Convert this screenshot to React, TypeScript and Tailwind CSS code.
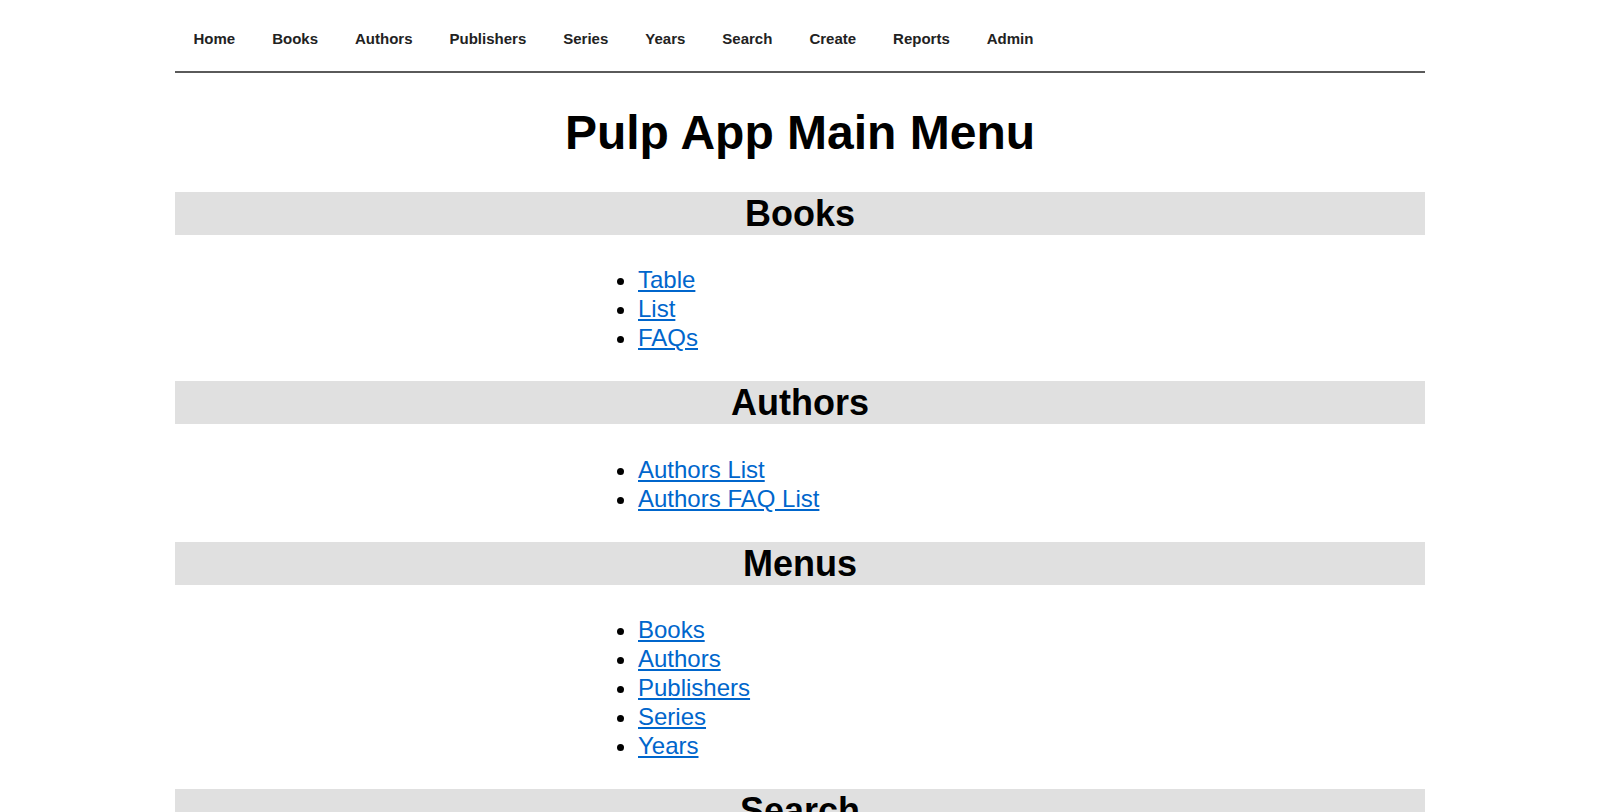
import React from "react";

const navLinks = [
  "Home",
  "Books",
  "Authors",
  "Publishers",
  "Series",
  "Years",
  "Search",
  "Create",
  "Reports",
  "Admin",
];

const sections: { title: string; links: string[] }[] = [
  { title: "Books", links: ["Table", "List", "FAQs"] },
  { title: "Authors", links: ["Authors List", "Authors FAQ List"] },
  {
    title: "Menus",
    links: ["Books", "Authors", "Publishers", "Series", "Years"],
  },
  { title: "Search", links: ["Search Books", "Search Authors"] },
];

export default function App() {
  return (
    <div className="min-h-screen bg-white text-black font-['Liberation_Sans',Arial,sans-serif]">
      <div className="mx-auto w-[1250px]">
        <nav className="flex border-b-2 border-[#5a5a5a] pt-[30px] pb-[24px]">
          {navLinks.map((l) => (
            <a
              key={l}
              href="#"
              className="px-[18.5px] text-[15px] leading-[17px] font-bold text-[#222]"
            >
              {l}
            </a>
          ))}
        </nav>

        <h1 className="mt-[31px] mb-[30px] text-center text-[48px] leading-[57.6px] font-bold">
          Pulp App Main Menu
        </h1>

        {sections.map((s) => (
          <section key={s.title}>
            <h2 className="bg-[#e0e0e0] text-center text-[36px] leading-[43px] font-bold">
              {s.title}
            </h2>
            <ul className="mt-[30.5px] mb-[29px] list-disc pl-[463px] text-[24px] leading-[29px]">
              {s.links.map((l) => (
                <li key={l}>
                  <a href="#" className="text-[#0066cc] underline">
                    {l}
                  </a>
                </li>
              ))}
            </ul>
          </section>
        ))}
      </div>
    </div>
  );
}
